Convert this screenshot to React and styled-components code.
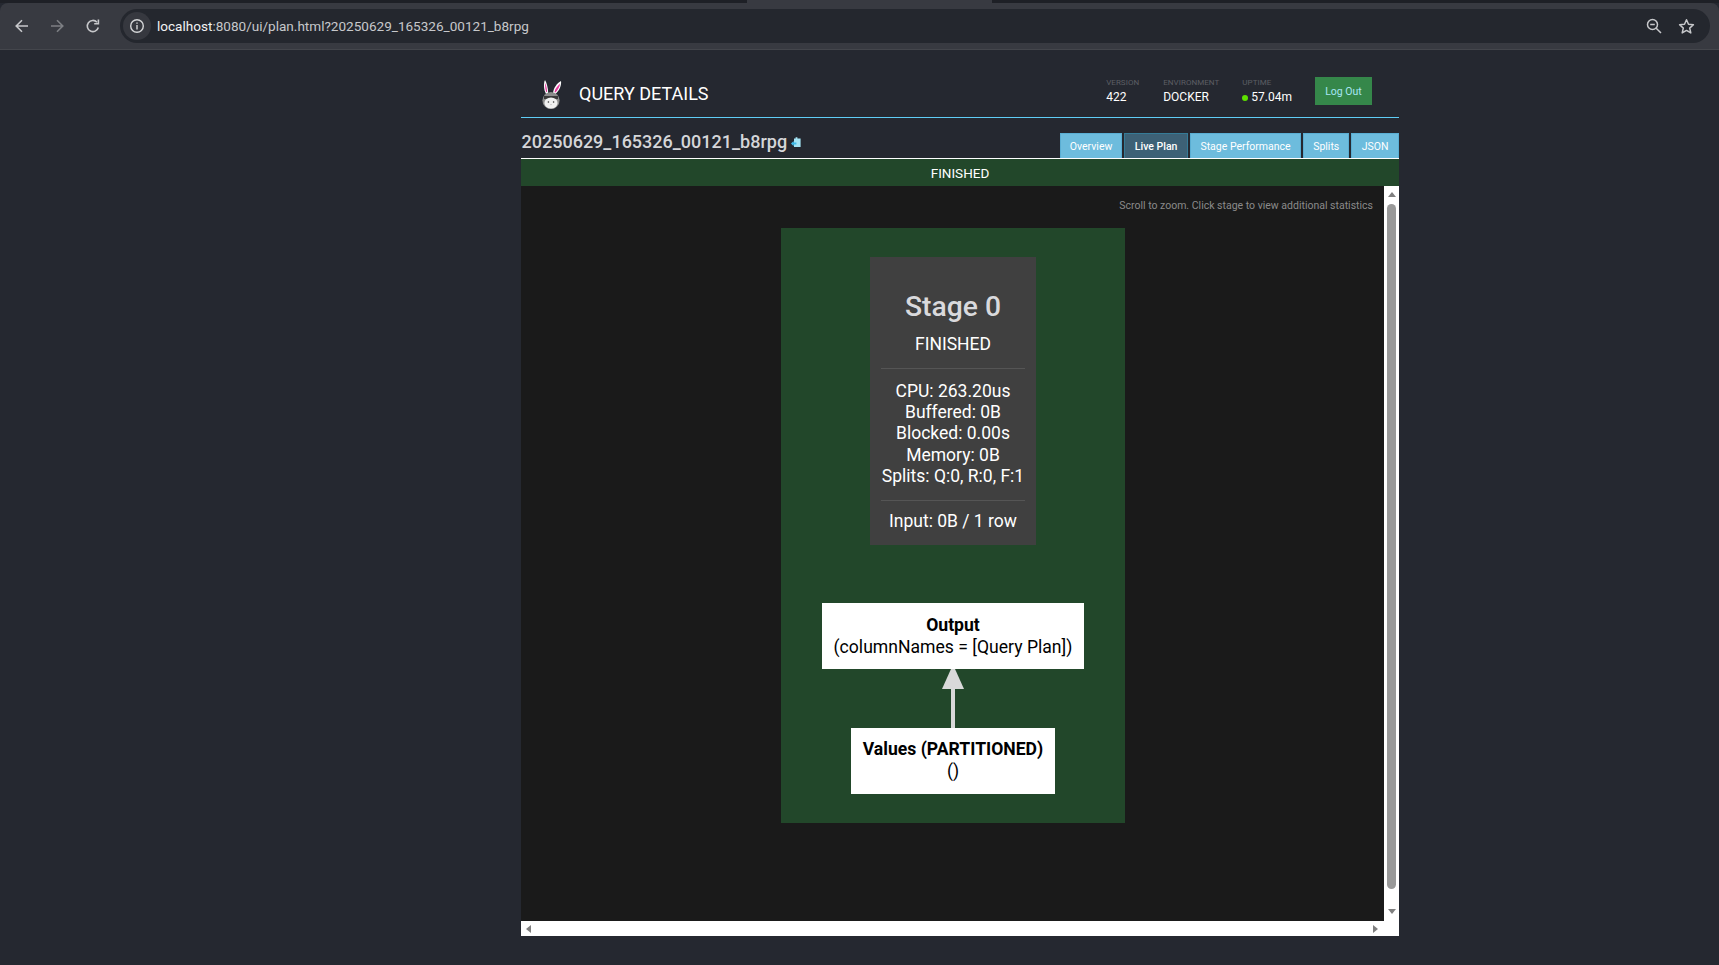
import React from 'react';
import styled, { createGlobalStyle } from 'styled-components';

const Global = createGlobalStyle`
  html, body { margin: 0; padding: 0; background: #252830; }
  body { font-family: Roboto, "Liberation Sans", sans-serif; }
  * { box-sizing: border-box; }
`;

const Page = styled.div`
  width: 1719px;
  height: 965px;
  overflow: hidden;
  background: #252830;
  display: flex;
  flex-direction: column;
`;

const TabStrip = styled.div`
  height: 3px;
  display: flex;
  background: #1e2026;
`;
const TabGap = styled.div`
  width: ${p => p.$w}px;
  background: ${p => p.$c};
`;

const Toolbar = styled.div`
  height: 47px;
  background: #383a41;
  border-bottom: 1px solid #44464c;
  padding: 6px 9px 6px 4px;
  display: flex;
  align-items: center;
  border-radius: 8px 8px 0 0;
`;
const NavButton = styled.div`
  width: 35.5px;
  height: 34px;
  display: flex;
  align-items: center;
  justify-content: center;
  color: ${p => (p.$dim ? '#7d7f84' : '#c7c8cb')};
`;
const Omnibox = styled.div`
  flex: 1;
  height: 34px;
  margin-left: 9.5px;
  border-radius: 17px;
  background: #24272e;
  display: flex;
  align-items: center;
  padding: 0 8px 0 3px;
  font-size: 13.55px;
`;
const InfoChip = styled.div`
  width: 28px;
  height: 28px;
  border-radius: 50%;
  background: #36383f;
  display: flex;
  align-items: center;
  justify-content: center;
  color: #d5d6d8;
  margin-right: 6px;
`;
const Url = styled.span`
  flex: 1;
  color: #c7c8cb;
  strong { font-weight: 400; color: #f1f2f3; }
`;
const OmniIcon = styled.div`
  width: 32px;
  display: flex;
  justify-content: center;
  color: #c7c8cb;
`;

const Main = styled.div`
  width: 878px;
  margin-left: 521px;
  display: flex;
  flex-direction: column;
`;

const Header = styled.div`
  height: 68px;
  padding: 24px 27px 0 17px;
  border-bottom: 1px solid #5fcdf5;
  display: flex;
  align-items: flex-start;
`;
const Logo = styled.svg`
  width: 26px;
  height: 32px;
  flex: none;
  margin-top: 5px;
`;
const HeaderTitle = styled.div`
  margin: 9px 0 0 15px;
  font-size: 18px;
  line-height: 22px;
  color: #fff;
  flex: 1;
`;
const InfoBlock = styled.div`
  margin-right: ${p => p.$gap}px;
  padding-top: 3.5px;
`;
const InfoLabel = styled.div`
  font-size: 8px;
  line-height: 10px;
  letter-spacing: 0.05px;
  color: #5c5e64;
`;
const InfoValue = styled.div`
  margin-top: 2px;
  font-size: 12px;
  line-height: 15px;
  color: #fff;
  display: flex;
  align-items: center;
`;
const StatusDot = styled.span`
  width: 6px;
  height: 6px;
  border-radius: 50%;
  background: #5ee000;
  margin-right: 3px;
  margin-top: 1px;
`;
const LogOut = styled.div`
  width: 57px;
  height: 28px;
  margin-top: 3px;
  background: #35874a;
  color: #a8e6f4;
  font-size: 10.5px;
  display: flex;
  align-items: center;
  justify-content: center;
`;

const TitleRow = styled.div`
  height: 41px;
  border-bottom: 1px solid #fff;
  display: flex;
  align-items: flex-end;
  justify-content: space-between;
`;
const QueryId = styled.div`
  align-self: flex-start;
  margin: 13px 0 0 0.5px;
  font-size: 18px;
  font-weight: 500;
  line-height: 22px;
  color: #d5d6d9;
  display: flex;
  align-items: center;
  gap: 4px;
`;
const Tabs = styled.div`
  display: flex;
  gap: 2px;
`;
const Tab = styled.div`
  height: 25px;
  padding: 0 ${p => p.$pad}px;
  background: ${p => (p.$active ? '#3d6176' : '#6dbcdd')};
  border: 1px solid ${p => (p.$active ? '#357b97' : '#5aaed3')};
  border-bottom: none;
  color: #fff;
  font-size: 10.5px;
  font-weight: ${p => (p.$active ? 500 : 400)};
  display: flex;
  align-items: center;
`;

const StateBar = styled.div`
  height: 27px;
  background: #22472a;
  color: #fff;
  font-size: 13.5px;
  display: flex;
  align-items: center;
  justify-content: center;
`;

const Viewer = styled.div`
  height: 750px;
  background: #fff;
  display: grid;
  grid-template-columns: 863px 15px;
  grid-template-rows: 735px 15px;
`;
const Canvas = styled.div`
  background: #1a1a1a;
  padding: 42px 0 0 260px;
  position: relative;
  overflow: hidden;
`;
const Hint = styled.div`
  position: absolute;
  top: 13px;
  right: 11px;
  font-size: 10.5px;
  line-height: 14px;
  color: #8a8a8a;
`;
const Cluster = styled.div`
  width: 344px;
  height: 595px;
  background: #22472a;
  padding-top: 29px;
  display: flex;
  flex-direction: column;
  align-items: center;
`;
const StageBox = styled.div`
  width: 166px;
  height: 288px;
  background: #404040;
  color: #fff;
  padding: 0 12px;
  display: flex;
  flex-direction: column;
  align-items: center;
  text-align: center;
  white-space: nowrap;
`;
const StageTitle = styled.div`
  margin-top: 34px;
  font-size: 28.3px;
  line-height: 32px;
  font-weight: 500;
  color: #d9d9dc;
`;
const StageState = styled.div`
  margin-top: 10px;
  font-size: 17.5px;
  line-height: 22px;
`;
const Rule = styled.div`
  width: 144px;
  height: 1px;
  background: #555;
  flex: none;
  margin: ${p => p.$m};
`;
const Stats = styled.div`
  font-size: 17.5px;
  line-height: 21.2px;
`;
const Input = styled.div`
  font-size: 17.5px;
  line-height: 22px;
`;
const PlanNode = styled.div`
  width: ${p => p.$w}px;
  height: 66px;
  padding-bottom: ${p => p.$lift || 0}px;
  background: #fff;
  color: #000;
  font-size: 17.6px;
  line-height: 22px;
  display: flex;
  flex-direction: column;
  align-items: center;
  justify-content: center;
  text-align: center;
  white-space: nowrap;
  margin-top: ${p => p.$top || 0}px;
  b { font-weight: 700; }
`;
const Edge = styled.svg`
  display: block;
  width: 24px;
  height: 59px;
  flex: none;
`;

const VBar = styled.div`
  background: #fff;
  display: flex;
  flex-direction: column;
  align-items: center;
  padding-top: 6px;
`;
const Thumb = styled.div`
  width: 9px;
  height: 685px;
  margin-top: 7px;
  background: #999;
  border-radius: 5px;
`;
const Arrow = styled.div`
  width: 0;
  height: 0;
  border-style: solid;
  ${p => p.$dir === 'up' && 'border-width: 0 4.5px 5px; border-color: transparent transparent #7f7f7f;'}
  ${p => p.$dir === 'down' && 'border-width: 5px 4.5px 0; border-color: #7f7f7f transparent transparent; margin-top: 20px;'}
  ${p => p.$dir === 'left' && 'border-width: 4.5px 5px 4.5px 0; border-color: transparent #7f7f7f transparent transparent;'}
  ${p => p.$dir === 'right' && 'border-width: 4.5px 0 4.5px 5px; border-color: transparent transparent transparent #7f7f7f;'}
`;
const HBar = styled.div`
  background: #fff;
  display: flex;
  align-items: center;
  justify-content: space-between;
  padding: 0 6px 0 5px;
`;
const Corner = styled.div`
  background: #fff;
`;

function Bunny() {
  return (
    <Logo viewBox="0 0 26 32">
      <path d="M8 15C5.5 10 5.5 4 7 1c1.8 3 3 8 3.2 13z" fill="#fff" />
      <path d="M8.2 13C7 9 7 6 7.3 4c1 2.5 1.6 5.5 1.8 9z" fill="#e83ca0" />
      <path d="M15 14C15.5 9 19 4 23 2c.6 4-1.5 9.5-5.5 13z" fill="#fff" />
      <path d="M16.5 13C17 9.5 19.5 7 22 4.5c0 3-2 6-4.5 9z" fill="#e83ca0" />
      <circle cx="13" cy="21.5" r="8.6" fill="#8d8d8d" />
      <path d="M6 17h14v3H6z" fill="#3a3a3a" />
      <ellipse cx="13" cy="24" rx="6.6" ry="5.6" fill="#f1f1f1" />
      <circle cx="10.4" cy="23" r=".8" fill="#333" />
      <circle cx="15.6" cy="23" r=".8" fill="#333" />
      <path d="M12 25.5h2l-1 .8z" fill="#999" />
    </Logo>
  );
}

function Clipboard() {
  return (
    <svg width="10" height="10" viewBox="0 0 10 10">
      <path d="M3 1.6h1.6V.2h1.8v1.4H9.6V10H3z" fill="#a4e4f6" />
      <path d="M0 6.6l2.6-2.6v1.6h2.8v2H2.6v1.6z" fill="#3fbcec" />
    </svg>
  );
}

export default function App() {
  return (
    <Page>
      <Global />
      <TabStrip>
        <TabGap $w={747} $c="#1e2026" />
        <TabGap $w={245} $c="#383a41" />
        <TabGap $w={727} $c="#1e2026" />
      </TabStrip>
      <Toolbar>
        <NavButton>
          <svg width="16" height="16" viewBox="0 0 16 16" fill="none" stroke="currentColor" strokeWidth="1.6"><path d="M14 8H2.5M8 2.2 2.2 8 8 13.8" /></svg>
        </NavButton>
        <NavButton $dim>
          <svg width="16" height="16" viewBox="0 0 16 16" fill="none" stroke="currentColor" strokeWidth="1.6"><path d="M2 8h11.5M8 2.2 13.8 8 8 13.8" /></svg>
        </NavButton>
        <NavButton>
          <svg width="16" height="16" viewBox="0 0 16 16" fill="none" stroke="currentColor" strokeWidth="1.6"><path d="M13.3 9.5A5.6 5.6 0 1 1 12 4.2" /><path d="M13.4 1.5v4.2H9.2" /></svg>
        </NavButton>
        <Omnibox>
          <InfoChip>
            <svg width="16" height="16" viewBox="0 0 16 16" fill="none" stroke="currentColor" strokeWidth="1.4"><circle cx="8" cy="8" r="6.3" /><path d="M8 7v4.4M8 4.4v1.4" /></svg>
          </InfoChip>
          <Url><strong>localhost</strong>:8080/ui/plan.html?20250629_165326_00121_b8rpg</Url>
          <OmniIcon>
            <svg width="16" height="16" viewBox="0 0 16 16" fill="none" stroke="currentColor" strokeWidth="1.5"><circle cx="6.5" cy="6.5" r="5" /><path d="M10.2 10.2 15 15M4.2 6.5h4.6" /></svg>
          </OmniIcon>
          <OmniIcon>
            <svg width="17" height="17" viewBox="0 0 17 17" fill="none" stroke="currentColor" strokeWidth="1.5" strokeLinejoin="round"><path d="M8.5 1.8l2 4.5 4.9.5-3.7 3.3 1.1 4.8-4.3-2.5-4.3 2.5 1.1-4.8L1.6 6.8l4.9-.5z" /></svg>
          </OmniIcon>
        </Omnibox>
      </Toolbar>
      <Main>
        <Header>
          <Bunny />
          <HeaderTitle>QUERY DETAILS</HeaderTitle>
          <InfoBlock $gap={24}>
            <InfoLabel>VERSION</InfoLabel>
            <InfoValue>422</InfoValue>
          </InfoBlock>
          <InfoBlock $gap={23}>
            <InfoLabel>ENVIRONMENT</InfoLabel>
            <InfoValue>DOCKER</InfoValue>
          </InfoBlock>
          <InfoBlock $gap={23}>
            <InfoLabel>UPTIME</InfoLabel>
            <InfoValue><StatusDot />57.04m</InfoValue>
          </InfoBlock>
          <LogOut>Log Out</LogOut>
        </Header>
        <TitleRow>
          <QueryId>20250629_165326_00121_b8rpg <Clipboard /></QueryId>
          <Tabs>
            <Tab $pad={9}>Overview</Tab>
            <Tab $active $pad={9.5}>Live Plan</Tab>
            <Tab $pad={9.5}>Stage Performance</Tab>
            <Tab $pad={9}>Splits</Tab>
            <Tab $pad={9.5}>JSON</Tab>
          </Tabs>
        </TitleRow>
        <StateBar>FINISHED</StateBar>
        <Viewer>
          <Canvas>
            <Hint>Scroll to zoom. Click stage to view additional statistics</Hint>
            <Cluster>
              <StageBox>
                <StageTitle>Stage 0</StageTitle>
                <StageState>FINISHED</StageState>
                <Rule $m="13px 0 12px" />
                <Stats>
                  <div>CPU: 263.20us</div>
                  <div>Buffered: 0B</div>
                  <div>Blocked: 0.00s</div>
                  <div>Memory: 0B</div>
                  <div>Splits: Q:0, R:0, F:1</div>
                </Stats>
                <Rule $m="13px 0 9px" />
                <Input>Input: 0B / 1 row</Input>
              </StageBox>
              <PlanNode $w={262} $top={58}>
                <b>Output</b>
                <span>(columnNames = [Query Plan])</span>
              </PlanNode>
              <Edge viewBox="0 0 24 59">
                <path d="M12 18V59" stroke="#d9d9d9" strokeWidth="4" fill="none" />
                <path d="M10 0 H14 L23 20 H1 Z" fill="#d9d9d9" />
              </Edge>
              <PlanNode $w={204} $lift={2}>
                <b>Values (PARTITIONED)</b>
                <span>()</span>
              </PlanNode>
            </Cluster>
          </Canvas>
          <VBar>
            <Arrow $dir="up" />
            <Thumb />
            <Arrow $dir="down" />
          </VBar>
          <HBar>
            <Arrow $dir="left" />
            <Arrow $dir="right" />
          </HBar>
          <Corner />
        </Viewer>
      </Main>
    </Page>
  );
}
